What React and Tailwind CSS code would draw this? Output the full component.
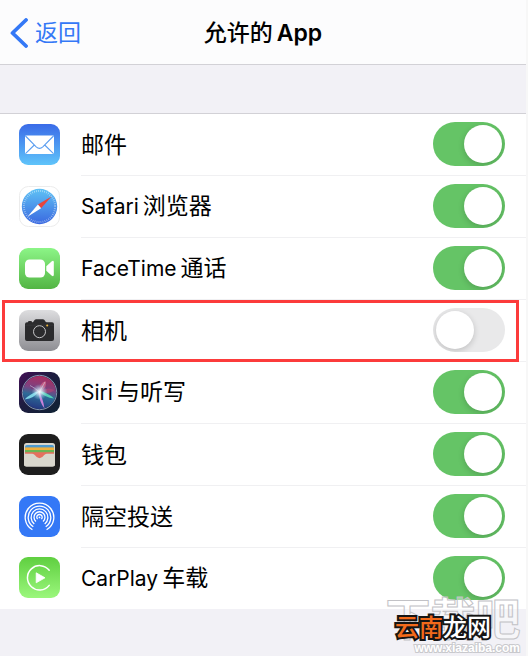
import React, { useState } from "react";

const ICON_CLASS = "mb-0.5 w-[41px] h-[41px] shrink-0";

function MailIcon() {
  return (
    <svg viewBox="0 0 41 41" className={ICON_CLASS} aria-hidden="true">
      <defs>
        <linearGradient id="mailBg" x1="0" y1="0" x2="0" y2="1">
          <stop offset="0" stopColor="#3a6be8" />
          <stop offset="1" stopColor="#5fc4fa" />
        </linearGradient>
      </defs>
      <rect width="41" height="41" rx="9" fill="url(#mailBg)" />
      <rect x="6" y="11.5" width="29" height="18.5" rx="1.2" fill="#fff" />
      <path
        d="M6.5 12 L17.2 22.8 Q20.5 25.8 23.8 22.8 L34.5 12 M6.5 29.6 L15.3 21 M34.5 29.6 L25.7 21"
        fill="none"
        stroke="#5a9df0"
        strokeWidth="1.1"
      />
    </svg>
  );
}

function SafariIcon() {
  return (
    <svg viewBox="0 0 41 41" className={ICON_CLASS} aria-hidden="true">
      <defs>
        <linearGradient id="safariBg" x1="0" y1="0" x2="0" y2="1">
          <stop offset="0" stopColor="#5fc2f5" />
          <stop offset="1" stopColor="#3a68e0" />
        </linearGradient>
      </defs>
      <rect x="0.5" y="0.5" width="40" height="40" rx="9" fill="#fff" stroke="#ececec" />
      <circle cx="20.5" cy="20.5" r="17.7" fill="url(#safariBg)" />
      <circle
        cx="20.5"
        cy="20.5"
        r="15.6"
        fill="none"
        stroke="#fff"
        strokeOpacity="0.6"
        strokeWidth="2"
        strokeDasharray="0.6 1.45"
      />
      <path d="M32.5 10.5 L18.9 18.6 L22.1 22.2 Z" fill="#e8453c" />
      <path d="M8.5 30.8 L18.9 18.6 L22.1 22.2 Z" fill="#fff" />
    </svg>
  );
}

function FaceTimeIcon() {
  return (
    <svg viewBox="0 0 41 41" className={ICON_CLASS} aria-hidden="true">
      <defs>
        <linearGradient id="faceTimeBg" x1="0" y1="0" x2="0" y2="1">
          <stop offset="0" stopColor="#8cf587" />
          <stop offset="1" stopColor="#53b544" />
        </linearGradient>
      </defs>
      <rect width="41" height="41" rx="9" fill="url(#faceTimeBg)" />
      <rect x="6" y="11.5" width="20" height="18" rx="4.5" fill="#fff" />
      <path
        d="M27.3 18.2 L32.8 13.2 Q34.8 12 34.8 14.2 V26.8 Q34.8 29 32.8 27.8 L27.3 22.8 Z"
        fill="#fff"
      />
    </svg>
  );
}

function CameraIcon() {
  return (
    <svg viewBox="0 0 41 41" className={ICON_CLASS} aria-hidden="true">
      <defs>
        <linearGradient id="cameraBg" x1="0" y1="0" x2="0" y2="1">
          <stop offset="0" stopColor="#dddddf" />
          <stop offset="1" stopColor="#8e8e93" />
        </linearGradient>
      </defs>
      <rect width="41" height="41" rx="9" fill="url(#cameraBg)" />
      <path
        d="M8 12.2 H9 Q9 11 10 11 H12 Q13 11 13 12.2 H13.6 Q14.4 12 15 10.7 Q15.6 9.2 17 9.2 H24 Q25.4 9.2 26 10.7 Q26.6 12.2 28 12.2 H33 Q35 12.2 35 14.2 V29 Q35 31 33 31 H8 Q6 31 6 29 V14.2 Q6 12.2 8 12.2 Z"
        fill="#2b2b2d"
      />
      <path d="M6 15.2 H35" stroke="#3d3d3f" strokeWidth="0.6" />
      <circle cx="20.5" cy="21.7" r="6.9" fill="#2b2b2d" />
      <circle cx="20.5" cy="21.7" r="6" fill="none" stroke="#c4c4c6" strokeWidth="1" />
      <circle cx="28.2" cy="15.6" r="1" fill="#f3b93c" />
    </svg>
  );
}

function SiriIcon() {
  return (
    <svg viewBox="0 0 41 41" className={ICON_CLASS} aria-hidden="true">
      <defs>
        <linearGradient id="siriBg" x1="0" y1="0" x2="1" y2="1">
          <stop offset="0" stopColor="#431055" />
          <stop offset="0.45" stopColor="#1d1c3f" />
          <stop offset="1" stopColor="#0f2334" />
        </linearGradient>
        <linearGradient id="siriOrb" x1="0.6" y1="0" x2="0.4" y2="1">
          <stop offset="0" stopColor="#c52e62" />
          <stop offset="0.38" stopColor="#8c4a8c" />
          <stop offset="0.6" stopColor="#2f79a6" />
          <stop offset="1" stopColor="#263a8c" />
        </linearGradient>
        <radialGradient id="siriGlow">
          <stop offset="0" stopColor="#fff" />
          <stop offset="0.35" stopColor="#e3f6ff" stopOpacity="0.7" />
          <stop offset="1" stopColor="#8fd8f0" stopOpacity="0" />
        </radialGradient>
      </defs>
      <rect width="41" height="41" rx="9" fill="url(#siriBg)" />
      <circle cx="20.5" cy="20.5" r="16.6" fill="url(#siriOrb)" fillOpacity="0.85" />
      <circle cx="20.5" cy="20.5" r="17.2" fill="none" stroke="#8fa3bb" strokeWidth="0.9" />
      <path d="M20.5 20 Q17 12 10.5 13.2 Q13 19 20.5 20 Z" fill="#793779" fillOpacity="0.8" />
      <path d="M20.5 20 Q20 11 26.5 9 Q29 16 20.5 20 Z" fill="#f07794" fillOpacity="0.55" />
      <path d="M20.5 20 Q28 14 35.5 18 Q30 23 20.5 20 Z" fill="#b54675" fillOpacity="0.6" />
      <path d="M20 19 Q16 26 5.5 27.5 Q12 21 20 19 Z" fill="#8ce7f2" fillOpacity="0.85" />
      <path d="M20 19 Q28 20 35 26.5 Q26 26 20 19 Z" fill="#59e3bd" fillOpacity="0.85" />
      <path d="M19.5 19 Q24 26 25.5 36.5 Q20.5 31 19.5 19 Z" fill="#d987e2" fillOpacity="0.9" />
      <path d="M20.5 20 Q14.5 15 11 13.5 M20.5 20 L26 10" stroke="#dff6ff" strokeOpacity="0.6" strokeWidth="0.8" fill="none" />
      <circle cx="20.5" cy="20" r="8" fill="url(#siriGlow)" />
    </svg>
  );
}

function WalletIcon() {
  return (
    <svg viewBox="0 0 41 41" className={ICON_CLASS} aria-hidden="true">
      <defs>
        <clipPath id="walletCards">
          <rect x="6" y="11" width="29" height="20" rx="2" />
        </clipPath>
      </defs>
      <rect width="41" height="41" rx="9" fill="#1e1e1e" />
      <rect x="5" y="9" width="31" height="23.5" rx="2.5" fill="#d9d7cd" />
      <g clipPath="url(#walletCards)">
        <rect x="6" y="11" width="29" height="3" fill="#4d9bd0" />
        <rect x="6" y="13.4" width="29" height="3" fill="#f0b03d" />
        <rect x="6" y="16" width="29" height="3" fill="#6bb554" />
        <rect x="6" y="18.2" width="29" height="6.5" fill="#e5705f" />
      </g>
      <path
        d="M5 19.8 H13.3 Q15 19.8 16 21.3 Q17.9 24.2 20.5 24.2 Q23.1 24.2 25 21.3 Q26 19.8 27.7 19.8 H36 V30 Q36 32.5 33.5 32.5 H7.5 Q5 32.5 5 30 Z"
        fill="#d9d7cd"
      />
    </svg>
  );
}

function AirDropIcon() {
  return (
    <svg viewBox="0 0 41 41" className={ICON_CLASS} aria-hidden="true">
      <rect width="41" height="41" rx="9" fill="#3478f6" />
      <g fill="none" stroke="#fff" strokeWidth="1.3">
        <path d="M13.4 33.8 A14.3 14.3 0 1 1 27.6 33.8" />
        <path d="M14.3 30.8 A11.3 11.3 0 1 1 26.7 30.8" />
        <path d="M15.3 27.9 A8.4 8.4 0 1 1 25.7 27.9" />
        <path d="M17 25.5 A5.5 5.5 0 1 1 24 25.5" />
        <path d="M18.6 23.1 A2.7 2.7 0 1 1 22.4 23.1" />
      </g>
      <circle cx="20.5" cy="21.4" r="0.9" fill="#fff" />
    </svg>
  );
}

function CarPlayIcon() {
  return (
    <svg viewBox="0 0 41 41" className={ICON_CLASS} aria-hidden="true">
      <defs>
        <linearGradient id="carPlayBg" x1="0" y1="0" x2="0" y2="1">
          <stop offset="0" stopColor="#5fcf40" />
          <stop offset="1" stopColor="#9bf77c" />
        </linearGradient>
      </defs>
      <rect width="41" height="41" rx="9" fill="url(#carPlayBg)" />
      <path
        d="M30.2 13.2 A12.2 12.2 0 1 0 30.2 28.4"
        fill="none"
        stroke="#fff"
        strokeWidth="1.5"
        strokeLinecap="round"
      />
      <path
        d="M17.2 15.8 V25.8 L26 20.8 Z"
        fill="#fff"
        stroke="#fff"
        strokeWidth="0.8"
        strokeLinejoin="round"
      />
    </svg>
  );
}

const APPS = [
  { id: "mail", latin: "", han: "邮件", Icon: MailIcon, on: true },
  { id: "safari", latin: "Safari", han: "浏览器", Icon: SafariIcon, on: true },
  { id: "facetime", latin: "FaceTime", han: "通话", Icon: FaceTimeIcon, on: true },
  { id: "camera", latin: "", han: "相机", Icon: CameraIcon, on: false, marked: true },
  { id: "siri", latin: "Siri", han: "与听写", Icon: SiriIcon, on: true },
  { id: "wallet", latin: "", han: "钱包", Icon: WalletIcon, on: true },
  { id: "airdrop", latin: "", han: "隔空投送", Icon: AirDropIcon, on: true },
  { id: "carplay", latin: "CarPlay", han: "车载", Icon: CarPlayIcon, on: true },
];

function AppRow({ app, checked, onToggle }) {
  const { Icon } = app;
  return (
    <li className="group relative flex items-center pl-[19px]">
      <Icon />
      <div className="ml-[21px] flex h-[62px] grow items-center justify-between border-b border-[#f0f0f2] pr-[21px] group-last:h-[61px] group-last:border-b-0">
        <label htmlFor={app.id} className="flex items-baseline gap-1 text-[23px] leading-8 text-black">
          {app.latin && <span className="text-[21px]">{app.latin}</span>}
          <span>{app.han}</span>
        </label>
        <input
          id={app.id}
          type="checkbox"
          role="switch"
          checked={checked}
          onChange={onToggle}
          className="mb-px h-11 w-[72px] shrink-0 cursor-pointer appearance-none overflow-hidden rounded-full bg-[#e9e9ea] p-[3px] before:block before:h-[38px] before:w-[38px] before:rounded-full before:bg-white before:shadow-[0_2px_6px_rgba(0,0,0,0.18)] checked:bg-[#65c466] checked:before:ml-7"
        />
      </div>
      {app.marked && (
        <div className="pointer-events-none absolute inset-y-0 left-[2px] right-[7px] border-3 border-[#fc3b3b]" />
      )}
    </li>
  );
}

function Watermark() {
  return (
    <div className="pointer-events-none absolute right-[6px] bottom-0 flex h-[62px] w-[134px] flex-col items-center">
      <p className="text-[45px] leading-[52px] font-bold whitespace-nowrap text-white/40 [-webkit-text-stroke:1px_#c2c2c6]">
        下载吧
      </p>
      <p className="absolute right-0 bottom-0 font-['Liberation_Sans',sans-serif] text-[12px] leading-4 font-bold text-white [paint-order:stroke] [-webkit-text-stroke:2px_#c9c9cd]">
        www.xiazaiba.com
      </p>
      <p className="absolute bottom-3 left-[9px] text-[24px] leading-8 font-medium whitespace-nowrap text-white [paint-order:stroke] [-webkit-text-stroke:4px_#151515]">
        <span className="text-[#f26a1b]">云南</span>龙网
      </p>
    </div>
  );
}

function App() {
  const [enabled, setEnabled] = useState(
    Object.fromEntries(APPS.map((app) => [app.id, app.on]))
  );

  const toggle = (id) => {
    setEnabled((prev) => ({ ...prev, [id]: !prev[id] }));
  };

  return (
    <div className="relative min-h-screen border-r-2 border-[#f7f7f7] bg-[#f2f1f6] font-['Inter','Noto_Sans_CJK_SC',sans-serif]">
      <header className="grid h-[65px] grid-cols-3 items-center border-b border-[#d2d1d6] bg-[#fcfcfd] pt-0.5">
        <button type="button" className="flex items-center gap-[7px] pl-[10px] text-[23px] leading-8 text-[#3478f6]">
          <svg viewBox="0 0 18 30" className="h-[30px] w-[18px]" aria-hidden="true">
            <path
              d="M16 2 L2.5 15 L16 28"
              fill="none"
              stroke="#3478f6"
              strokeWidth="3.8"
              strokeLinecap="round"
              strokeLinejoin="round"
            />
          </svg>
          返回
        </button>
        <h1 className="flex items-baseline justify-center gap-1 text-[23px] leading-8 font-semibold whitespace-nowrap text-black">
          <span className="font-medium">允许的</span>
          <span>App</span>
        </h1>
      </header>
      <main className="pt-12">
        <ul className="border-t border-[#d2d1d6] bg-white">
          {APPS.map((app) => (
            <AppRow
              key={app.id}
              app={app}
              checked={enabled[app.id]}
              onToggle={() => toggle(app.id)}
            />
          ))}
        </ul>
      </main>
      <Watermark />
    </div>
  );
}

export default App;
